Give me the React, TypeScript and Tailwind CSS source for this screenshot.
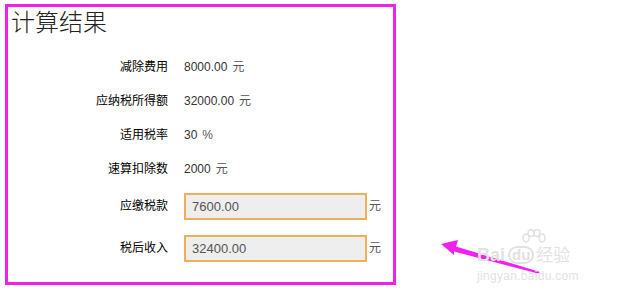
import React from "react";

const rows = [
  { label: "减除费用", value: "8000.00", unit: "元" },
  { label: "应纳税所得额", value: "32000.00", unit: "元" },
  { label: "适用税率", value: "30", unit: "%" },
  { label: "速算扣除数", value: "2000", unit: "元" },
];

const inputs = [
  { label: "应缴税款", value: "7600.00", h: "h-[40px]" },
  { label: "税后收入", value: "32400.00", h: "h-[44px]" },
];

const font = "font-['Liberation_Sans','Noto_Sans_CJK_SC',sans-serif]";

export default function App() {
  return (
    <div className={`relative w-[623px] h-[298px] bg-white overflow-hidden ${font}`}>
      <div className="ml-[5px] mt-[4px] w-[391px] h-[281px] border-[3px] border-[#f020ee]">
        <h1 className="pl-[3px] text-[24px] leading-[28px] font-light text-[#222] font-['Noto_Sans_CJK_SC',serif]">
          计算结果
        </h1>

        <div className="mt-[15px]">
          {rows.map((r) => (
            <div key={r.label} className="flex items-center h-[34px] text-[12px]">
              <div className="w-[160px] text-right text-black">{r.label}</div>
              <div className="ml-[16px] text-[#333]">
                {r.value}
                <span className="ml-[5px] text-[#555]">{r.unit}</span>
              </div>
            </div>
          ))}

          {inputs.map((r) => (
            <div key={r.label} className={`flex items-center ${r.h} text-[12px]`}>
              <div className="w-[160px] text-right text-black">{r.label}</div>
              <input
                readOnly
                value={r.value}
                className="ml-[16px] w-[183px] h-[27px] border-2 border-[#f2ad58] bg-[#eeeeee] pl-[6px] text-[13px] text-[#555] outline-none"
              />
              <span className="ml-[2px] text-[#555]">元</span>
            </div>
          ))}
        </div>
      </div>

      {/* arrow */}
      <svg className="absolute left-0 top-0" width="623" height="298">
        <polygon
          points="441,244 458,240 456,246.5 540,272 538,273.5 454,251.5 454,255"
          fill="#f020ee"
        />
      </svg>

      {/* watermark */}
      <div className="absolute left-[477px] top-[229px] w-[112px] text-[#e2e2e2]">
        <svg className="absolute left-[44px] top-0" width="26" height="20">
          <ellipse cx="5" cy="9" rx="3" ry="4" fill="none" stroke="#e0e0e0" strokeWidth="1.5" />
          <ellipse cx="10" cy="4" rx="3" ry="3.5" fill="none" stroke="#e0e0e0" strokeWidth="1.5" />
          <ellipse cx="16" cy="4" rx="3" ry="3.5" fill="none" stroke="#e0e0e0" strokeWidth="1.5" />
          <ellipse cx="21" cy="9" rx="3" ry="4" fill="none" stroke="#e0e0e0" strokeWidth="1.5" />
        </svg>
        <div className="flex items-end mt-[17px] h-[18px] leading-none">
          <span className="text-[18px] font-bold">Bai</span>
          <span className="ml-[3px] text-[15px] font-bold rounded-full border-2 border-[#e2e2e2] px-[2px] leading-[14px]">du</span>
          <span className="ml-[2px] text-[17px]">经验</span>
        </div>
        <div className="mt-[6px] text-[12px] leading-none tracking-[0.3px]">jingyan.baidu.com</div>
      </div>
    </div>
  );
}
